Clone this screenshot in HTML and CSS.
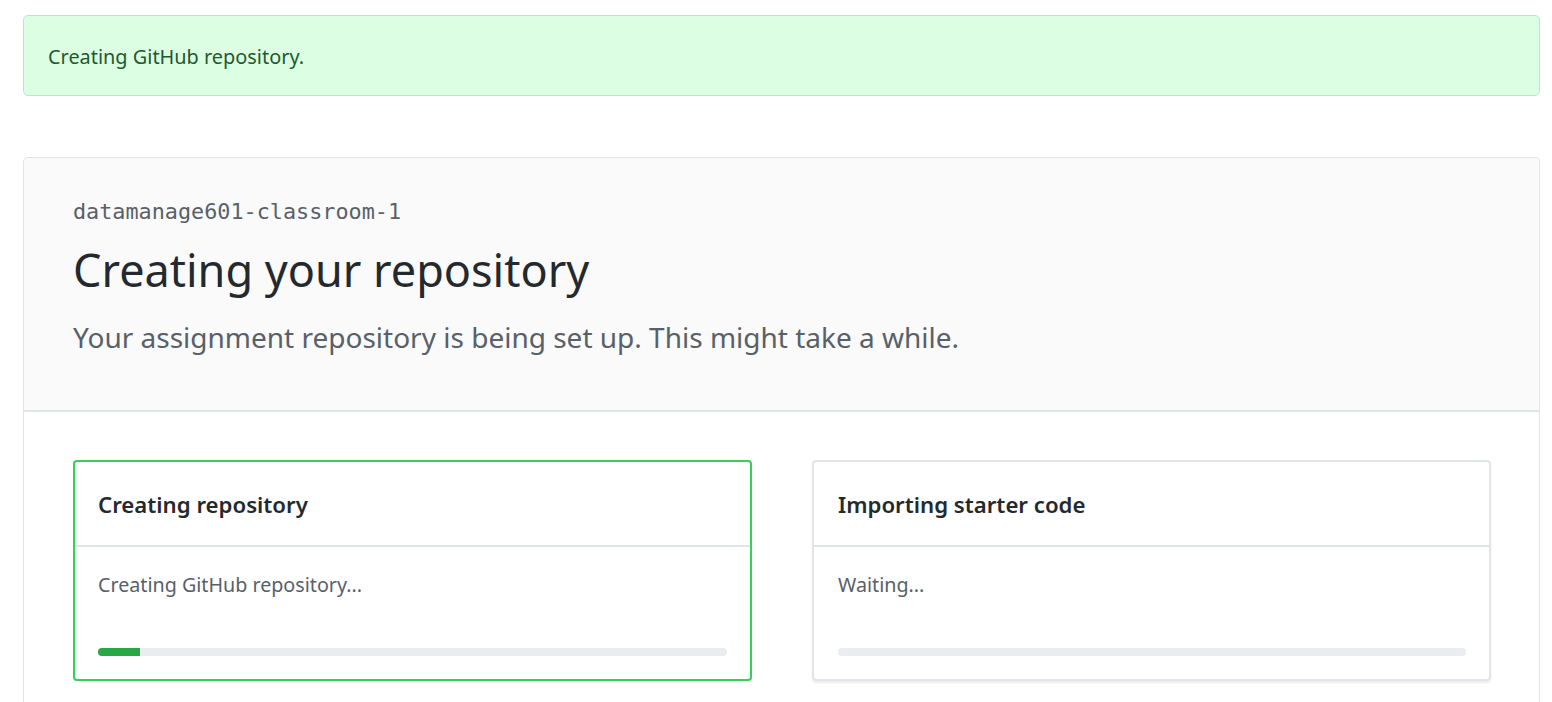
FILE: index.html
```html
<!DOCTYPE html>
<html lang="en">
<head>
<meta charset="utf-8">
<title>Creating your repository</title>
<link rel="stylesheet" href="styles.css">
</head>
<body>
<div class="page">
  <div class="flash">Creating GitHub repository.</div>
  <div class="box">
    <div class="box-header">
      <div class="org">datamanage601-classroom-1</div>
      <h1 class="title">Creating your repository</h1>
      <p class="lead">Your assignment repository is being set up. This might take a while.</p>
    </div>
    <div class="box-body">
      <div class="steps">
        <div class="step active">
          <div class="step-header">Creating repository</div>
          <div class="step-body">
            <div class="step-status">Creating GitHub repository...</div>
            <div class="progress"><div class="progress-fill" style="width: 6.7%"></div></div>
          </div>
        </div>
        <div class="step">
          <div class="step-header">Importing starter code</div>
          <div class="step-body">
            <div class="step-status">Waiting...</div>
            <div class="progress"><div class="progress-fill" style="width: 0%"></div></div>
          </div>
        </div>
      </div>
    </div>
  </div>
</div>
</body>
</html>
```

FILE: styles.css
```css
* { box-sizing: border-box; }
html, body { margin: 0; padding: 0; background: #fff; }
body {
  font-family: "Noto Sans", "Open Sans", sans-serif;
  color: #24292e;
  font-size: 19px;
  line-height: 1.5;
}
.page {
  padding: 15px 12px 0 23px;
}
.flash {
  background: #dcffe4;
  border: 1px solid #bfe3c6;
  border-radius: 5px;
  color: #1d5a2c;
  padding: 26px 24px 0;
  height: 81px;
  font-size: 19.9px;
  line-height: 30px;
}
.box {
  margin-top: 61px;
  border: 1px solid #e1e4e8;
  border-bottom: none;
  border-radius: 5px 5px 0 0;
  height: 560px;
}
.box-header {
  background: #fafafa;
  border-bottom: 2px solid #e1e4e8;
  border-radius: 5px 5px 0 0;
  padding: 39px 49px 0;
  height: 254px;
}
.org {
  font-family: "DejaVu Sans Mono", "Liberation Mono", monospace;
  font-size: 21.8px;
  line-height: 30px;
  color: #586069;
}
.title {
  margin: 15px 0 0;
  font-size: 45px;
  font-weight: 400;
  line-height: 56px;
  color: #24292e;
}
.lead {
  margin: 19px 0 0;
  font-size: 28px;
  line-height: 40px;
  color: #586069;
}
.box-body {
  padding: 48px 48px 0 49px;
}
.steps {
  display: grid;
  grid-template-columns: 679px 679px;
  column-gap: 60px;
}
.step {
  border: 2px solid #e1e4e8;
  border-radius: 4px;
  box-shadow: 0 2px 2px rgba(27, 31, 35, 0.08);
  height: 221px;
}
.step.active {
  border-color: #34d058;
  box-shadow: none;
}
.step-header {
  padding: 25px 23px 0;
  height: 85px;
  border-bottom: 2px solid #e1e4e8;
  font-size: 22.2px;
  font-weight: 600;
  line-height: 35px;
  color: #24292e;
}
.step + .step .step-header,
.step + .step .step-body {
  padding-left: 24px;
}
.step-body {
  padding: 23px 23px 0;
}
.step-status {
  font-size: 19.7px;
  line-height: 30px;
  color: #586069;
}
.progress {
  margin-top: 48px;
  height: 8px;
  border-radius: 4px;
  background: #eaecef;
  overflow: hidden;
}
.progress-fill {
  height: 100%;
  background: #28a745;
}
```
